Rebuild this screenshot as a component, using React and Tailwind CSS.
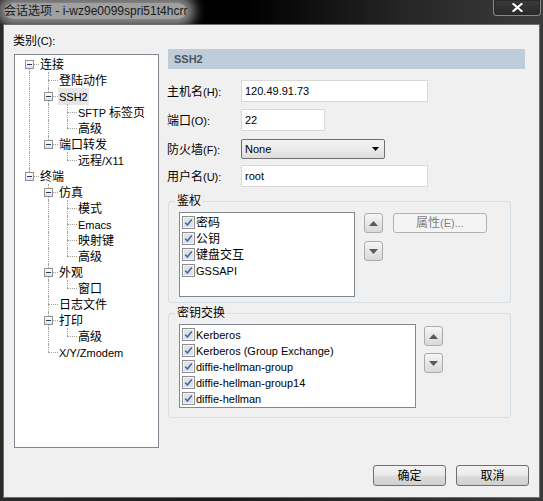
import React from 'react';

const tree = [
  { t: '连接', l: 0, kids: true },
  { t: '登陆动作', l: 1 },
  { t: 'SSH2', l: 1, kids: true, sel: true },
  { t: 'SFTP 标签页', l: 2 },
  { t: '高级', l: 2 },
  { t: '端口转发', l: 1, kids: true },
  { t: '远程/X11', l: 2 },
  { t: '终端', l: 0, kids: true },
  { t: '仿真', l: 1, kids: true },
  { t: '模式', l: 2 },
  { t: 'Emacs', l: 2 },
  { t: '映射键', l: 2 },
  { t: '高级', l: 2 },
  { t: '外观', l: 1, kids: true },
  { t: '窗口', l: 2 },
  { t: '日志文件', l: 1 },
  { t: '打印', l: 1, kids: true },
  { t: '高级', l: 2 },
  { t: 'X/Y/Zmodem', l: 1 },
];

// split CJK and latin runs so each gets its own size
const Mixed = ({ s }) => {
  const parts = s.match(/[\u4e00-\u9fff]+|[^\u4e00-\u9fff]+/g) || [];
  return parts.map((p, i) =>
    /[\u4e00-\u9fff]/.test(p) ? (
      <span key={i} className="text-[12px]">{p}</span>
    ) : (
      <span key={i} className="text-[11px]">{p}</span>
    )
  );
};

const Tree = () => {
  const cont = [];
  const rows = tree.map((item, i) => {
    let hasNext = false;
    for (let j = i + 1; j < tree.length; j++) {
      if (tree[j].l <= item.l) {
        hasNext = tree[j].l === item.l;
        break;
      }
    }
    const anc = cont.slice(0, item.l);
    cont[item.l] = hasNext;
    return { ...item, hasNext, anc, first: i === 0 };
  });

  return (
    <div className="h-[394px] border border-[#828790] bg-white pt-[1px] pl-[5px]">
      {rows.map((r, i) => (
        <div key={i} className="flex h-[16px]">
          {r.anc.map((c, k) => (
            <div key={k} className="relative w-[19px] h-full">
              {c && <div className="absolute left-[9px] top-0 h-full border-l border-dotted border-[#a0a0a0]" />}
            </div>
          ))}
          <div className="relative w-[19px] h-full">
            {!r.first && <div className="absolute left-[9px] top-0 h-[8px] border-l border-dotted border-[#a0a0a0]" />}
            {r.hasNext && <div className="absolute left-[9px] top-[8px] h-[8px] border-l border-dotted border-[#a0a0a0]" />}
            <div className="absolute left-[9px] top-[8px] w-[10px] border-t border-dotted border-[#a0a0a0]" />
            {r.kids && (
              <div className="absolute left-[5px] top-[4px] w-[9px] h-[9px] border border-[#919191] bg-[linear-gradient(#ffffff,#e2e2e2)] flex items-center justify-center">
                <div className="w-[5px] h-[1px] bg-[#1f3a64]" />
              </div>
            )}
          </div>
          <span
            className={`self-center leading-[16px] px-[1px] ${r.sel ? 'bg-[#e6e6e6]' : ''} text-black`}
          >
            <Mixed s={r.t} />
          </span>
        </div>
      ))}
    </div>
  );
};

const CheckBox = () => (
  <svg width="13" height="13" viewBox="0 0 13 13" className="shrink-0">
    <rect x="0.5" y="0.5" width="12" height="12" fill="#f4f4f4" stroke="#8e8f8f" />
    <rect x="2" y="2" width="9" height="9" fill="#dfe2e8" />
    <path d="M3.3 6.6 L5.4 9 L9.7 3.4" fill="none" stroke="#4a66a8" strokeWidth="1.6" />
  </svg>
);

const ListBox = ({ items, w, h }) => (
  <div
    className="border border-[#828790] bg-white pt-[1px] pl-[2px]"
    style={{ width: w, height: h }}
  >
    {items.map((it) => (
      <div key={it} className="flex items-center h-[16px] gap-[1px]">
        <CheckBox />
        <span className="leading-[16px]">
          <Mixed s={it} />
        </span>
      </div>
    ))}
  </div>
);

const ArrowBtn = ({ up }) => (
  <div className="w-[19px] h-[20px] rounded-[3px] border border-[#acacac] bg-[linear-gradient(#f6f6f6,#e6e6e6_50%,#dadada)] flex items-center justify-center">
    <svg width="9" height="5" viewBox="0 0 9 5">
      {up ? <path d="M0 5 L4.5 0 L9 5 Z" fill="#5a5a5a" /> : <path d="M0 0 L4.5 5 L9 0 Z" fill="#5a5a5a" />}
    </svg>
  </div>
);

const Group = ({ label, h, children }) => (
  <div className="relative w-[343px] rounded-[3px] border border-[#d5dfe5]" style={{ height: h }}>
    <span className="absolute -top-[9px] left-[6px] px-[2px] bg-[#f0f0f0] leading-[16px] text-[12px]">
      {label}
    </span>
    {children}
  </div>
);

const Field = ({ label, children, className = '' }) => (
  <div className={`flex items-center ${className}`}>
    <span className="w-[74px] leading-[16px]">
      <Mixed s={label} />
    </span>
    {children}
  </div>
);

const TextBox = ({ value, w }) => (
  <div
    className="h-[22px] border border-[#d9d9d9] bg-white pl-[3px] flex items-center text-[11px]"
    style={{ width: w }}
  >
    {value}
  </div>
);

const WinButton = ({ label }) => (
  <div className="w-[73px] h-[21px] rounded-[3px] border border-[#707070] bg-[linear-gradient(#f2f2f2,#ebebeb_48%,#dddddd_52%,#cfcfcf)] flex items-center justify-center text-[12px]">
    {label}
  </div>
);

export default function App() {
  return (
    <div className="w-[543px] h-[501px] overflow-hidden bg-[linear-gradient(to_right,#2a2a2a,#1a1a1a_40%,#3a3a3a)] font-['Liberation_Sans','Noto_Sans_CJK_SC',sans-serif] text-black">
      {/* title bar */}
      <div className="relative h-[24px] overflow-hidden bg-[linear-gradient(to_right,#000000,#000000_45%,#262626_75%,#3c3c3c)] flex items-start">
        <span className="ml-[4px] mt-[3px] leading-[16px] text-[12px] text-[#1a1a1a] bg-[rgba(200,200,200,0.8)] rounded-[10px] shadow-[0_0_12px_8px_rgba(200,200,200,0.7)] whitespace-nowrap">
          会话选项 - i-wz9e0099spri51t4hcrr
        </span>
        <div className="absolute right-[2px] top-0 w-[48px] h-[16px] rounded-b-[4px] border border-t-0 border-[#8a8a8a] shadow-[inset_0_0_0_1px_#2a2a2a] bg-[linear-gradient(#3a3a3a,#2a2a2a)] flex items-center justify-center">
          <svg width="11" height="9" viewBox="0 0 11 9">
            <path d="M1.5 1 L9.5 8 M9.5 1 L1.5 8" stroke="#202020" strokeWidth="3.6" strokeLinecap="square" />
            <path d="M1.5 1 L9.5 8 M9.5 1 L1.5 8" stroke="#ffffff" strokeWidth="2.2" strokeLinecap="square" />
          </svg>
        </div>
      </div>

      {/* dialog body */}
      <div className="mx-[3px] h-[474px] border border-[#6e6e6e] bg-[#f0f0f0] flex flex-col">
        <div className="flex pt-[7px]">
          <div className="ml-[10px] w-[145px]">
            <div className="leading-[16px] -ml-[1px] mb-[5px]">
              <Mixed s="类别(C):" />
            </div>
            <Tree />
          </div>

          <div className="ml-[9px] w-[357px] pt-[17px] flex flex-col">
            <div className="h-[20px] bg-[#bfcddb] pl-[6px] flex items-center text-[11px] font-bold text-[#4b5663]">
              SSH2
            </div>
            <Field label="主机名(H):" className="mt-[11px] -ml-[1px]">
              <TextBox value="120.49.91.73" w={187} />
            </Field>
            <Field label="端口(O):" className="mt-[7px] -ml-[1px]">
              <TextBox value="22" w={84} />
            </Field>
            <Field label="防火墙(F):" className="mt-[8px] -ml-[1px]">
              <div className="w-[144px] h-[20px] rounded-[2px] border border-[#707070] bg-[linear-gradient(#f3f3f3,#ebebeb_50%,#dcdcdc)] pl-[3px] pr-[5px] flex items-center justify-between text-[11px]">
                <span>None</span>
                <svg width="7" height="4" viewBox="0 0 7 4">
                  <path d="M0 0 L7 0 L3.5 4 Z" fill="#000" />
                </svg>
              </div>
            </Field>
            <Field label="用户名(U):" className="mt-[6px] -ml-[1px]">
              <TextBox value="root" w={187} />
            </Field>

            <div className="mt-[14px]">
              <Group label="鉴权" h={102}>
                <div className="flex pt-[10px] pl-[10px]">
                  <ListBox items={['密码', '公钥', '键盘交互', 'GSSAPI']} w={176} h={85} />
                  <div className="ml-[9px] mt-[1px] flex flex-col gap-[8px]">
                    <ArrowBtn up />
                    <ArrowBtn />
                  </div>
                  <div className="ml-[10px] mt-[1px] w-[94px] h-[20px] rounded-[3px] border border-[#adb2b5] bg-[#f4f4f4] flex items-center justify-center text-[#838383] leading-[16px]">
                    <Mixed s="属性(E)..." />
                  </div>
                </div>
              </Group>
            </div>

            <div className="mt-[10px]">
              <Group label="密钥交换" h={105}>
                <div className="flex pt-[10px] pl-[10px]">
                  <ListBox
                    items={[
                      'Kerberos',
                      'Kerberos (Group Exchange)',
                      'diffie-hellman-group',
                      'diffie-hellman-group14',
                      'diffie-hellman',
                    ]}
                    w={237}
                    h={84}
                  />
                  <div className="ml-[8px] mt-[2px] flex flex-col gap-[7px]">
                    <ArrowBtn up />
                    <ArrowBtn />
                  </div>
                </div>
              </Group>
            </div>
          </div>
        </div>

        <div className="mt-[17px] flex justify-end gap-[10px] pr-[10px]">
          <WinButton label="确定" />
          <WinButton label="取消" />
        </div>
      </div>
    </div>
  );
}
